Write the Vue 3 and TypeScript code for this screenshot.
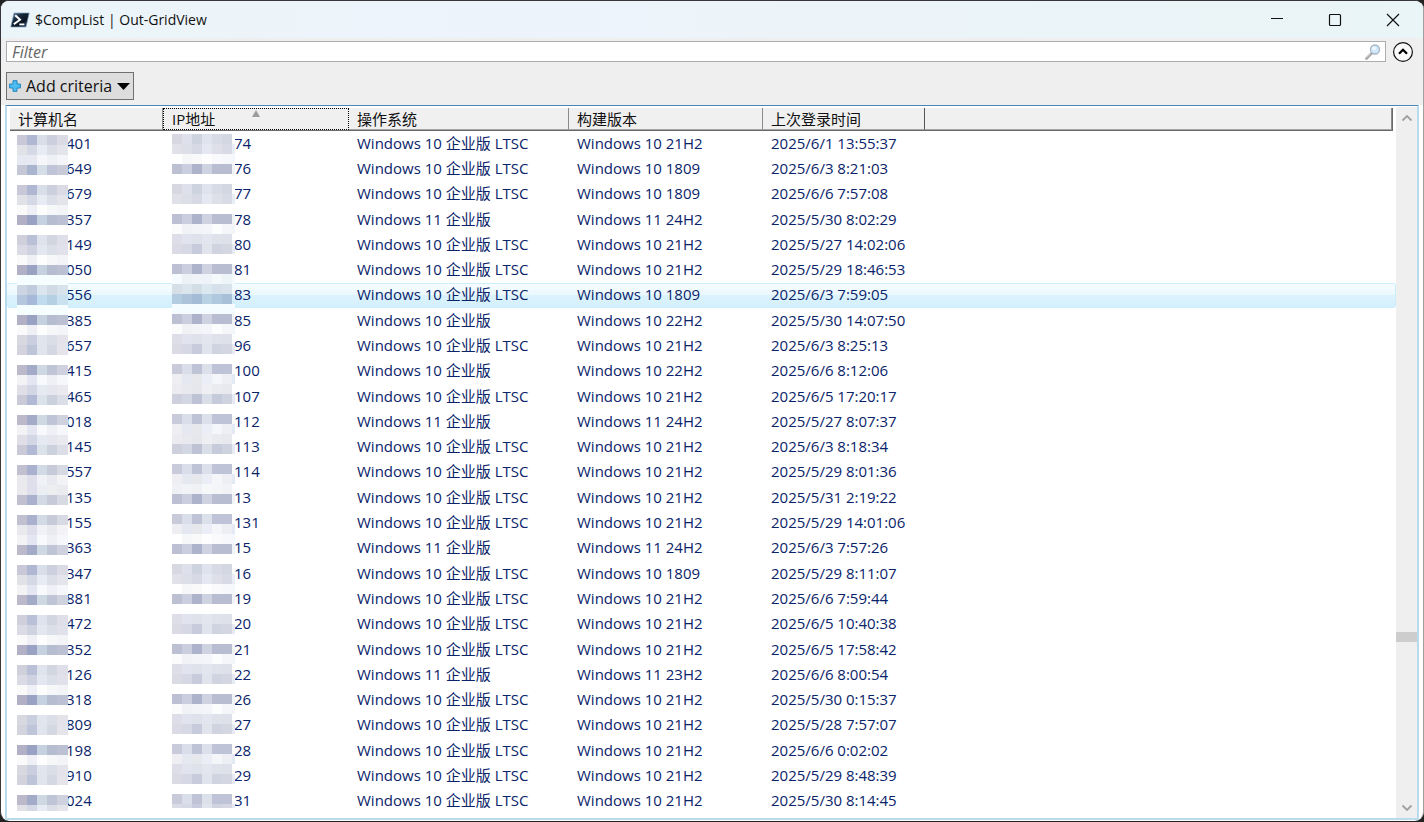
<script setup lang="ts">
import { ref } from 'vue'

interface Computer {
  name: string
  ip: string
  os: string
  build: string
  login: string
}

const source = `401|74|10L|10 21H2|2025/6/1 13:55:37
649|76|10L|10 1809|2025/6/3 8:21:03
679|77|10L|10 1809|2025/6/6 7:57:08
357|78|11|11 24H2|2025/5/30 8:02:29
149|80|10L|10 21H2|2025/5/27 14:02:06
050|81|10L|10 21H2|2025/5/29 18:46:53
556|83|10L|10 1809|2025/6/3 7:59:05
385|85|10|10 22H2|2025/5/30 14:07:50
657|96|10L|10 21H2|2025/6/3 8:25:13
415|100|10|10 22H2|2025/6/6 8:12:06
465|107|10L|10 21H2|2025/6/5 17:20:17
018|112|11|11 24H2|2025/5/27 8:07:37
145|113|10L|10 21H2|2025/6/3 8:18:34
557|114|10L|10 21H2|2025/5/29 8:01:36
135|13|10L|10 21H2|2025/5/31 2:19:22
155|131|10L|10 21H2|2025/5/29 14:01:06
363|15|11|11 24H2|2025/6/3 7:57:26
347|16|10L|10 1809|2025/5/29 8:11:07
881|19|10L|10 21H2|2025/6/6 7:59:44
472|20|10L|10 21H2|2025/6/5 10:40:38
352|21|10L|10 21H2|2025/6/5 17:58:42
126|22|11|11 23H2|2025/6/6 8:00:54
318|26|10L|10 21H2|2025/5/30 0:15:37
809|27|10L|10 21H2|2025/5/28 7:57:07
198|28|10L|10 21H2|2025/6/6 0:02:02
910|29|10L|10 21H2|2025/5/29 8:48:39
024|31|10L|10 21H2|2025/5/30 8:14:45`

const computers: Computer[] = source.split('\n').map((line) => {
  const [name, ip, os, build, login] = line.split('|')
  return {
    name,
    ip,
    os: `Windows ${os.slice(0, 2)} 企业版${os.endsWith('L') ? ' LTSC' : ''}`,
    build: `Windows ${build}`,
    login,
  }
})

const columns = ['计算机名', 'IP地址', '操作系统', '构建版本', '上次登录时间']
const highlighted = ref(6)
const filter = ref('')

// Privacy mask: each letter is one band of 10px tiles, '.' leaves the row visible.
type Palette = Record<string, string>
const namePalette: Palette = {
  A: 'c9c8d8 b0b7d3 d8dfe9 ccd0de dadbe4',
  B: 'e1e1e8 d5d9e6 e6ebf4 dddfe8 e4e4eb',
  C: 'e6e9f2 e6e9f2 f5f6f9 eff0f5 f4f5f8',
  D: 'c5c6d6 a9b4cf d5dee7 bfc4d8 c9cad8',
  E: 'fafafa eff0f5 fdfdfe f6f7f9 f3f4f8',
  F: 'b2b0c4 9aa2c4 c5d1df b7bdd0 bcc0d3',
  G: 'cfd0db bac0d7 dfe3ed d2d6e1 dedfe8',
  H: 'dbdbe5 ced2e1 e3e7f0 dadfe8 e0e1ea',
  I: 'd8d8e1 cacfdf e1e6ee d9dee7 e4e3e9',
  J: 'd3d3dd bfc5d9 dfe4ed d3d8e2 e5e4ea',
  K: 'bbb9ca a3abc9 cdd8e3 bfc4d6 cfd1de',
  L: 'f3f3f5 e4e7f1 f7f9fc eff0f5 f6f7fa',
  M: 'e0dfe8 d3d6e5 e4e9f2 e5e6ee e9e9ef',
  N: 'cac9d8 b2b9d5 dbe2ea ccd1de dbdde7',
  O: 'c1c0d0 a9b1cf d2dae5 c6cad9 d7d9e3',
  P: 'eaeaee dedfea f0f2f7 e9eaef f3f3f6',
  Q: 'eaeaee dedfea ebeff4 eceef0 eaebef',
  S: 'f6fdff f6fdff f6fdff f6fdff f6fdff',
  T: 'cdd4e2 c0cbde dae5ed cfdae4 d8e2ea',
  U: 'b5c7df a6b9d8 c0dbee b5cfe3 cae1f0',
}
const ipPalette: Palette = {
  A: 'd8d8e3 dee1eb ced3e0 dfe3ed d8dae6 d3d7e2 ffffff',
  B: 'e1e1ea dcdee8 d7d9e4 e5e8f2 dedfe9 d8dbe6 e8edf6',
  C: 'ffffff f6f7f9 f9f9fa fdfdfd fafafc f7f8fb f4f7fb',
  D: 'bdbfd2 cacede aeb3cc ced2e1 b8bdd2 b8bdd2 f0f3f8',
  E: 'fbfbfc f1f2f6 f3f4f8 f3f5fa fbfdfc f5f6f9 f2f5fa',
  F: 'dddee8 e1e4ee dfe2eb e3e6ef e0e2eb dee0ea ffffff',
  G: 'dbdbe6 d6d9e5 c8cbdb e1e4ed d0d3e0 d4d6e2 e5eaf4',
  H: 'c9cbdb dadeea bfc3d6 dce0eb bec3d7 bec3d7 ffffff',
  I: 'eeeef3 e5e8f0 e6e8ec ebeef7 f5f6f9 eeeff4 e4eaf5',
  J: 'ecebf0 e8e9ef e6e7ec efeff3 eaebef e8e9ee ffffff',
  K: 'cfd0de d2d7e3 bdc2d5 dadee9 c6cbdb ced3df e5eaf4',
  L: 'f0f1f4 f2f3f6 f0f1f4 f6f7f8 f4f5f7 f2f3f6 ffffff',
  S: 'f4fcff ecf2f6 f0f4f8 edf3f8 f4fafc eef5f9 f2faff',
  T: 'd6dee8 dae5ed d3dde6 dce8f0 d5e0ea d8e3ec f2faff',
  U: 'b4cce0 acc3da a4bcd5 b8d1e3 b0c8dd a9c1d8 d3edfa',
  V: 'f4fcff f4fcff f4fcff f4fcff f4fcff f4fcff f4fcff',
}
const nameBands = 'ABCD.ABEF.GHEFSTUSFEIJ.KLMN.KLMN.OPQO.OPLK.ABLK.GHEF.GHEF.IJ.FEIJ.KB'
const ipBands = 'ABCD.AB.DEFG.DSTUVDEFG.HIJK.HIJK.HILD.HICD.ABCD.FG.DEFG.DEFG.HIFG.HG'

function tiles(bands: string, palette: Palette) {
  return bands.split('').flatMap((band, row) =>
    band === '.'
      ? []
      : palette[band].split(' ').map((hex, col) => ({ x: col * 10, y: row * 10, fill: `#${hex}` })),
  )
}
const nameTiles = tiles(nameBands, namePalette)
const ipTiles = tiles(ipBands, ipPalette)
</script>

<template>
  <div class="desktop">
    <main class="window">
      <header class="titlebar">
        <svg class="logo" width="20" height="16" viewBox="0 0 20 16" aria-hidden="true">
          <defs>
            <linearGradient id="shell" x1="0" y1="0" x2="1" y2="1">
              <stop offset="0" stop-color="#5f86ad" />
              <stop offset="0.35" stop-color="#17283b" />
              <stop offset="0.65" stop-color="#0b1522" />
              <stop offset="1" stop-color="#375d86" />
            </linearGradient>
          </defs>
          <path d="M4 1H19.2L16 15H.8Z" fill="url(#shell)" stroke="#7e9dbb" stroke-width=".7" />
          <path d="M5.2 3.2 10 7.7 3.8 12.2" fill="none" stroke="#fff" stroke-width="2" />
          <path d="M9.3 12.3H14.4" stroke="#fff" stroke-width="1.8" />
        </svg>
        <h1>$CompList | Out-GridView</h1>
        <div class="caption">
          <button type="button" aria-label="Minimize">
            <svg width="14" height="14" viewBox="0 0 14 14"><path d="M1 5.5H13" /></svg>
          </button>
          <button type="button" aria-label="Maximize">
            <svg width="14" height="14" viewBox="0 0 14 14"><rect x="1.5" y="1.5" width="11" height="11" rx="1" /></svg>
          </button>
          <button type="button" aria-label="Close">
            <svg width="14" height="14" viewBox="0 0 14 14"><path d="M1 1 13 13M13 1 1 13" /></svg>
          </button>
        </div>
      </header>

      <section class="tools">
        <div class="filter-row">
          <label class="filter">
            <input v-model="filter" type="text" placeholder="Filter" aria-label="Filter" />
            <svg width="16" height="16" viewBox="0 0 16 16" aria-hidden="true">
              <path d="M1.5 14.5 6.3 9.7" stroke="#a3a3a3" stroke-width="2.6" stroke-linecap="round" />
              <path d="M1.8 13.6 5.6 9.8" stroke="#dcdcdc" stroke-width="1" />
              <circle cx="10" cy="5.5" r="4.5" fill="#cfe8fb" stroke="#a9b4c4" stroke-width="1.3" />
              <circle cx="9" cy="4.5" r="2" fill="#eff8ff" />
            </svg>
          </label>
          <button type="button" class="collapse" aria-label="Hide query">
            <svg width="22" height="22" viewBox="0 0 22 22">
              <circle cx="11" cy="11" r="9.4" fill="#fafafa" stroke="#111" stroke-width="1.2" />
              <path d="M7 12.7 11 8.8 15 12.7" fill="none" stroke="#000" stroke-width="2.3" />
            </svg>
          </button>
        </div>
        <button type="button" class="criteria">
          <svg width="12" height="12" viewBox="0 0 12 12" aria-hidden="true">
            <path d="M4 .7H8V4H11.4V8H8V11.3H4V8H.6V4H4Z" fill="#4dbdf0" stroke="#2386c4" stroke-width="1" />
          </svg>
          <span>Add criteria</span>
          <svg width="13" height="7" viewBox="0 0 13 7" aria-hidden="true"><path d="M0 0H13L6.5 7Z" /></svg>
        </button>
      </section>

      <section class="list">
        <div class="grid">
          <table>
            <thead>
              <tr>
                <th v-for="(column, i) in columns" :key="column" scope="col" :class="{ sorted: i === 1 }">
                  <button type="button">{{ column }}</button>
                  <svg v-if="i === 1" class="arrow" width="8" height="7" viewBox="0 0 8 7"><path d="M4 0 8 7H0Z" /></svg>
                </th>
                <td></td>
              </tr>
            </thead>
            <tbody>
              <tr v-for="(pc, i) in computers" :key="pc.name" :class="{ active: i === highlighted }">
                <td class="name">{{ pc.name }}</td>
                <td class="ip">{{ pc.ip }}</td>
                <td>{{ pc.os }}</td>
                <td>{{ pc.build }}</td>
                <td>{{ pc.login }}</td>
              </tr>
            </tbody>
          </table>
          <svg class="mask mask-name" width="51" height="676" shape-rendering="crispEdges" aria-hidden="true">
            <rect v-for="(t, i) in nameTiles" :key="i" :x="t.x" :y="t.y" :width="t.x === 40 ? 11 : 10" height="10" :fill="t.fill" />
          </svg>
          <svg class="mask mask-ip" width="63" height="674" shape-rendering="crispEdges" aria-hidden="true">
            <rect v-for="(t, i) in ipTiles" :key="i" :x="t.x" :y="t.y" width="10" height="10" :fill="t.fill" />
          </svg>
        </div>
        <div class="scroll">
          <button type="button" aria-label="Scroll up">
            <svg width="12" height="8" viewBox="0 0 12 8"><path d="M1.5 6.5 6 2 10.5 6.5" /></svg>
          </button>
          <div class="track">
            <div class="before"></div>
            <div class="thumb"></div>
            <div class="after"></div>
          </div>
          <button type="button" aria-label="Scroll down">
            <svg width="12" height="8" viewBox="0 0 12 8"><path d="M1.5 1.5 6 6 10.5 1.5" /></svg>
          </button>
        </div>
      </section>
    </main>
  </div>
</template>

<style>
body {
  margin: 0;
}
</style>

<style scoped>
* {
  box-sizing: border-box;
}
.desktop {
  display: flex;
  min-height: 100vh;
  background: #222;
  font: 15px/20px 'Open Sans', 'Noto Sans CJK SC', sans-serif;
  color: #111;
}
.window {
  display: flex;
  flex: 1;
  flex-direction: column;
  min-width: 0;
  margin-bottom: 1px;
  overflow: hidden;
  border: 1px solid #38363a;
  border-right-color: #a0a0a0;
  border-bottom: 0;
  border-radius: 9px;
  background: #fff;
}
button {
  padding: 0;
  border: 0;
  background: none;
  color: inherit;
  font: inherit;
}
.titlebar {
  display: flex;
  align-items: center;
  height: 37px;
  padding: 0 1px 0 9px;
  background: linear-gradient(90deg, #ebf5f9, #edf3fb 35%, #ebf4f8 70%, #eaf5f7);
}
.titlebar h1 {
  flex: 1;
  margin: 0 0 0 5px;
  font-size: 14px;
  font-weight: 400;
}
.caption {
  display: flex;
}
.caption button {
  display: flex;
  align-items: center;
  justify-content: center;
  width: 58px;
  height: 36px;
}
.caption svg {
  fill: none;
  stroke: #111;
  stroke-width: 1.2;
}
.tools {
  padding: 3px 9px 5px 5px;
  background: #efefef;
}
.filter-row {
  display: flex;
  align-items: center;
  gap: 6px;
  height: 21px;
}
.filter {
  display: flex;
  flex: 1;
  align-items: center;
  height: 21px;
  padding-right: 4px;
  border: 1px solid #abadb3;
  background: #fff;
}
.filter input {
  flex: 1;
  min-width: 0;
  height: 19px;
  padding: 0 5px;
  border: 0;
  outline: 0;
  background: none;
  font: inherit;
  font-size: 16px;
}
.filter input::placeholder {
  color: #666;
  font-style: italic;
  opacity: 1;
}
.collapse {
  display: flex;
  width: 22px;
}
.criteria {
  display: flex;
  align-items: center;
  gap: 5px;
  height: 28px;
  margin-top: 10px;
  padding: 0 3px 0 2px;
  border: 1px solid #707070;
  background: #ddd;
  font-size: 16px;
}
.list {
  display: flex;
  flex: 1;
  margin: 0 4px 1px;
  padding-top: 1px;
  border: 2px solid #b9dbee;
  border-top: 1px solid #4a86b8;
  background: #fff;
}
.grid {
  position: relative;
  display: flex;
  flex: 1;
  min-width: 0;
  padding-bottom: 4px;
}
table {
  display: flex;
  flex: 1;
  flex-direction: column;
  min-width: 0;
}
thead {
  display: block;
  margin: 1px 3px 0;
}
tr {
  display: grid;
  grid-template-columns: 153px 186px 220px 194px 162px 1fr;
}
thead tr {
  height: 23px;
  border-right: 1px solid #696969;
  border-bottom: 1px solid #696969;
  background: #f0f0f0;
}
thead th,
thead td {
  position: relative;
  padding: 0;
  border-right: 1px solid #8c8c8c;
  border-bottom: 1px solid #a5a5a5;
  font-weight: 400;
  text-align: left;
}
thead th:last-of-type {
  border-right-color: #555;
}
thead button {
  width: 100%;
  height: 21px;
  padding-left: 8px;
  text-align: left;
}
th.sorted {
  border: 1px dotted #000;
}
th.sorted button {
  height: 19px;
}
.arrow {
  position: absolute;
  top: 1px;
  left: 88px;
  fill: #9c9c9c;
}
tbody {
  display: grid;
  flex: 1;
  grid-auto-rows: minmax(25px, 1fr);
}
tbody tr {
  align-items: center;
  padding: 0 3px;
  border: 1px solid transparent;
  border-left: 0;
  border-radius: 3px;
  color: #0a246a;
}
tbody tr.active {
  border-color: #caeefb;
  background: linear-gradient(#f7fcff, #eaf8fe 48%, #dcf3fd 50%, #d3effc);
}
tbody td {
  padding: 0 0 2px 8px;
  white-space: pre;
}
td.name {
  padding-left: 56px;
}
td.ip {
  padding-left: 71px;
}
.mask {
  position: absolute;
}
.mask-name {
  top: 28px;
  left: 10px;
}
.mask-ip {
  top: 27px;
  left: 165px;
}
.scroll {
  display: flex;
  flex-direction: column;
  width: 21px;
  background: #efefef;
}
.scroll button {
  display: flex;
  align-items: center;
  justify-content: center;
  height: 21px;
}
.scroll svg {
  fill: none;
  stroke: #a0a0a0;
  stroke-width: 1.8;
}
.track {
  display: flex;
  flex: 1;
  flex-direction: column;
}
.before {
  flex: 765;
}
.thumb {
  height: 10px;
  background: #cdcdcd;
}
.after {
  flex: 235;
}
</style>
